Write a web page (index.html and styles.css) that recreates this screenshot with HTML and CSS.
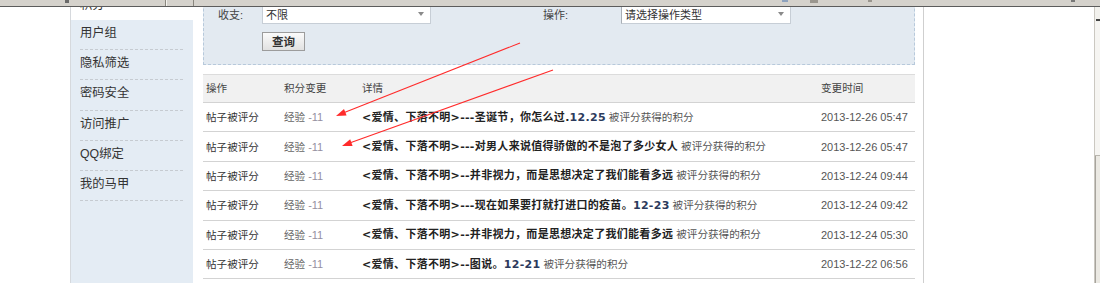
FILE: index.html
```html
<!DOCTYPE html>
<html lang="zh-CN">
<head>
<meta charset="utf-8">
<title>积分记录</title>
<link rel="stylesheet" href="styles.css">
</head>
<body>
<div class="chrome">
  <div class="seg1"><i class="tick t0"></i></div>
  <div class="seg2"></div>
  <div class="rest">
    <i class="tick t1"></i><i class="tick t2"></i><i class="tick t3"></i><i class="tick t4"></i>
  </div>
</div>
<div class="vscroll">
  <div class="up"><i></i></div>
  <div class="track"></div>
  <div class="thumb"></div>
</div>

<div class="page">
  <aside class="side">
    <ul class="nav">
      <li class="cur"><a href="#">积分</a></li>
      <li><a href="#">用户组</a></li>
      <li><a href="#">隐私筛选</a></li>
      <li><a href="#">密码安全</a></li>
      <li><a href="#">访问推广</a></li>
      <li><a href="#">QQ绑定</a></li>
      <li><a href="#">我的马甲</a></li>
    </ul>
  </aside>
  <main class="main">
    <form class="search">
      <div class="srow">
        <label class="lab lab1">收支:</label>
        <div class="sel sel1"><span>不限</span><i class="arr"></i></div>
        <label class="lab lab2">操作:</label>
        <div class="sel sel2"><span>请选择操作类型</span><i class="arr"></i></div>
      </div>
      <div class="brow"><button type="button" class="btn">查询</button></div>
    </form>
    <table class="log">
      <colgroup><col class="c1"><col class="c2"><col class="c3"><col class="c4"></colgroup>
      <thead>
        <tr><th>操作</th><th>积分变更</th><th>详情</th><th>变更时间</th></tr>
      </thead>
      <tbody>
        <tr><td>帖子被评分</td><td><span class="ty">经验</span> <span class="pt">-11</span></td><td><b class="tt">&lt;爱情、下落不明&gt;---圣诞节，你怎么过.<span class="n">12.25</span></b> <span class="ds">被评分获得的积分</span></td><td class="tm">2013-12-26 05:47</td></tr>
        <tr><td>帖子被评分</td><td><span class="ty">经验</span> <span class="pt">-11</span></td><td><b class="tt">&lt;爱情、下落不明&gt;---对男人来说值得骄傲的不是泡了多少女人</b> <span class="ds">被评分获得的积分</span></td><td class="tm">2013-12-26 05:47</td></tr>
        <tr><td>帖子被评分</td><td><span class="ty">经验</span> <span class="pt">-11</span></td><td><b class="tt">&lt;爱情、下落不明&gt;--并非视力，而是思想决定了我们能看多远</b> <span class="ds">被评分获得的积分</span></td><td class="tm">2013-12-24 09:44</td></tr>
        <tr><td>帖子被评分</td><td><span class="ty">经验</span> <span class="pt">-11</span></td><td><b class="tt">&lt;爱情、下落不明&gt;---现在如果要打就打进口的疫苗。<span class="n">12-23</span></b> <span class="ds">被评分获得的积分</span></td><td class="tm">2013-12-24 09:42</td></tr>
        <tr><td>帖子被评分</td><td><span class="ty">经验</span> <span class="pt">-11</span></td><td><b class="tt">&lt;爱情、下落不明&gt;--并非视力，而是思想决定了我们能看多远</b> <span class="ds">被评分获得的积分</span></td><td class="tm">2013-12-24 05:30</td></tr>
        <tr><td>帖子被评分</td><td><span class="ty">经验</span> <span class="pt">-11</span></td><td><b class="tt">&lt;爱情、下落不明&gt;--图说。<span class="n">12-21</span></b> <span class="ds">被评分获得的积分</span></td><td class="tm">2013-12-22 06:56</td></tr>
      </tbody>
    </table>
  </main>
</div>

<svg class="marks" width="1100" height="283" viewBox="0 0 1100 283" aria-hidden="true">
  <line x1="520" y1="43" x2="345" y2="112.3" stroke="#ff2b2b" stroke-width="1.1"/>
  <polygon points="336,116 346.6,115.6 344,109.1" fill="#ff2b2b"/>
  <line x1="553" y1="70" x2="351" y2="142.6" stroke="#ff2b2b" stroke-width="1.1"/>
  <polygon points="342,146 352.6,145.9 350.2,139.3" fill="#ff2b2b"/>
</svg>
</body>
</html>
```
FILE: styles.css
```css
* { box-sizing: border-box; }
html, body { margin: 0; padding: 0; overflow: hidden; background: #fff; }
body {
  position: relative;
  width: 1100px;
  height: 283px;
  font-family: "Liberation Sans", "Noto Sans CJK SC", sans-serif;
  color: #333;
}

/* window chrome overlay */
.chrome {
  position: fixed; top: 0; left: 0; right: 0;
  height: 7px;
  background: #d5d2cc;
  border-bottom: 1px solid #5c5c5c;
  display: flex;
  z-index: 6;
}
.chrome .seg1 { width: 166px; border-right: 1px solid #8a877f; display: flex; }
.chrome .seg2 { width: 28px; border-left: 1px solid #f4f3ef; border-right: 1px solid #8a877f; }
.chrome .rest { flex: 1; display: flex; }
.tick { display: block; height: 2px; background: #9a968e; }
.t0 { margin-left: 65px; width: 4px; height: 3px; background: #6a6a6a; }
.t1 { margin-left: 588px; width: 6px; background: #8ea2bd; }
.t2 { margin-left: 22px; width: 8px; height: 3px; }
.t3 { margin-left: 50px; width: 4px; }
.t4 { margin-left: 199px; width: 4px; background: #777; }

/* right scrollbar overlay */
.vscroll {
  position: fixed; top: 7px; right: 0; bottom: 0;
  width: 6px;
  border-left: 1px solid #cbc8c1;
  background: #f2f1ed;
  display: flex; flex-direction: column;
  z-index: 6;
}
.vscroll .up { height: 15px; display: flex; align-items: flex-end; justify-content: flex-end; }
.vscroll .up i { display: block; width: 4px; height: 2px; background: #444; margin-bottom: 1px; }
.vscroll .track { height: 133px; background: #f6f5f2; }
.vscroll .thumb { flex: 1; background: #ebe9e3; border-top: 1px solid #b9b6af; box-shadow: inset 1px 0 0 #a7a49d; }

/* page */
.page {
  display: flex;
  margin: -10px 0 0 70px;
  width: 854px;
  min-height: 330px;
  border-left: 1px solid #d6d9dd;
  border-right: 1px solid #cfcfcf;
}

.side { flex: none; width: 122px; background: #e4ecf4; }
.nav { list-style: none; margin: 0; padding: 0; font-size: 12.3px; }
.nav li a {
  display: block;
  margin: 0 10px 0 9px;
  height: 30.2px;
  line-height: 26px;
  border-bottom: 1px dashed #c6cbd1;
  color: #333;
  text-decoration: none;
}
.nav li.cur { background: #fff; }
.nav li.cur a { height: 30px; line-height: 30px; border-bottom: none; overflow: hidden; }

.main { flex: none; width: 730px; padding: 4px 8px 0 10px; }

.search {
  background: #e3eaf1;
  border: 1px dashed #b7c9db;
  padding: 9px 0 13px 14px;
  margin: 0;
}
.srow { display: flex; align-items: center; height: 20px; font-size: 11px; color: #444; }
.lab { display: block; }
.lab1 { width: 44px; }
.lab2 { width: 78px; margin-left: 112px; }
.sel {
  display: flex; align-items: center; justify-content: space-between;
  height: 20px;
  background: #fff;
  border: 1px solid #c7ced6;
  padding-left: 3px;
  font-size: 11px; color: #333;
}
.sel1 { width: 169px; }
.sel2 { width: 170px; border-left-color: #a9afb6; }
.arr {
  display: block; width: 0; height: 0;
  border-top: 4px solid #8a8a8a;
  border-left: 3.5px solid transparent;
  border-right: 3.5px solid transparent;
  margin-right: 6px;
}
.brow { margin-top: 8px; display: flex; }
.btn {
  margin-left: 44px;
  width: 43px; height: 19px;
  padding: 0;
  border: 1px solid #9c9c9c;
  background: linear-gradient(#fbfbfb, #e1e1e1);
  font-family: "Noto Sans CJK SC", sans-serif;
  font-size: 11.5px; font-weight: bold;
  line-height: 17px;
  color: #333;
}

.log {
  width: 712px;
  margin-top: 9px;
  border-collapse: separate;
  border-spacing: 0;
  table-layout: fixed;
  font-size: 10.6px;
}
.log .c1 { width: 78px; }
.log .c2 { width: 78px; }
.log .c3 { width: 459px; }
.log .c4 { width: 97px; }
.log th {
  background: #f1f1f1;
  border-top: 1px solid #dcdcdc;
  border-bottom: 1px solid #d3d3d3;
  font-weight: normal;
  text-align: left;
  line-height: 27px;
  padding: 0 0 0 3px;
  color: #444;
}
.log td {
  height: 29.4px;
  border-bottom: 1px solid #d3d3d3;
  line-height: 16px;
  vertical-align: middle;
  padding: 0 0 0 3px;
  white-space: nowrap;
  overflow: hidden;
  color: #333;
}
.ty { color: #666; }
.pt { color: #958fa0; font-size: 11px; }
.tt {
  color: #222;
  font-weight: bold;
  font-family: "DejaVu Sans", "Noto Sans CJK SC", sans-serif;
  font-size: 11px;
  letter-spacing: 0.3px;
}
.tt .n { color: #2c3a5c; }
.ds { color: #555; }
.log td.tm { color: #555; font-size: 11px; }

.marks { position: absolute; top: 0; left: 0; pointer-events: none; z-index: 4; }
```
